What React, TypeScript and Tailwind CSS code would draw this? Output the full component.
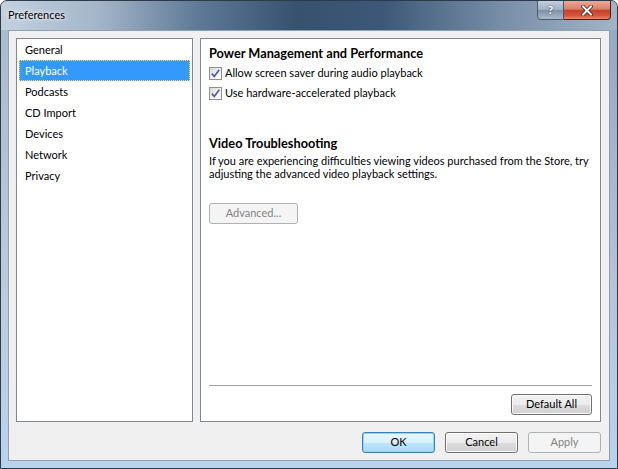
import React from "react";

const font = { fontFamily: 'Lato, "Noto Sans", sans-serif' };

function Checkbox() {
  return (
    <div className="w-[13px] h-[13px] border border-[#8f8f8f] bg-[linear-gradient(135deg,#d8d8d8_0%,#f4f4f4_60%,#ffffff_100%)] flex items-center justify-center shrink-0">
      <svg width="11" height="11" viewBox="0 0 11 11">
        <path d="M1.8 5.6 L4.3 8.4 L9.3 1.8" fill="none" stroke="#4a5f97" strokeWidth="1.7" />
      </svg>
    </div>
  );
}

function Btn({
  children,
  w,
  variant = "normal",
}: {
  children: React.ReactNode;
  w: string;
  variant?: "normal" | "focus" | "disabled";
}) {
  if (variant === "disabled") {
    return (
      <div className={`${w} h-[21px] shrink-0 rounded-[3px] border border-[#adb2b5] bg-[#f4f4f4] text-[#838383] flex items-center justify-center text-[11px]`}>
        {children}
      </div>
    );
  }
  if (variant === "focus") {
    return (
      <div className={`${w} h-[21px] shrink-0 rounded-[3px] border border-[#3c7fb1] bg-[linear-gradient(to_bottom,#eaf6fd_0%,#d9f0fc_50%,#bee6fd_51%,#a7d9f5_100%)] shadow-[inset_0_0_0_1px_#8fd6f8] text-black flex items-center justify-center text-[11px]`}>
        {children}
      </div>
    );
  }
  return (
    <div className={`${w} h-[21px] shrink-0 rounded-[3px] border border-[#707070] bg-[linear-gradient(to_bottom,#f2f2f2_0%,#ebebeb_50%,#dddddd_51%,#cfcfcf_100%)] shadow-[inset_0_0_0_1px_#fcfcfc] text-black flex items-center justify-center text-[11px]`}>
      {children}
    </div>
  );
}

export default function App() {
  const items = ["General", "Playback", "Podcasts", "CD Import", "Devices", "Network", "Privacy"];
  return (
    <div className="w-[618px] h-[469px] bg-white overflow-hidden" style={font}>
      <div className="w-[618px] h-[469px] flex flex-col rounded-t-[7px] border border-[#2c3a4a] bg-[#a9bbce] overflow-hidden">
        {/* Title bar */}
        <div className="h-[29px] shrink-0 relative flex items-center pl-[7px] bg-[linear-gradient(90deg,#c3d1df_0%,#a3b5c8_16%,#5f7996_32%,#36526f_48%,#3d5878_62%,#7a90a9_82%,#a2b4c6_100%)]">
          <span className="text-[11px] text-black [text-shadow:0_0_6px_rgba(255,255,255,0.9),0_0_3px_rgba(255,255,255,0.9)]">
            Preferences
          </span>
          <div className="absolute right-[6px] top-[-1px] flex">
            <div className="w-[27px] h-[20px] rounded-bl-[4px] border border-[#4a5a6c] bg-[linear-gradient(to_bottom,#c2cfdd_0%,#9eafc2_50%,#7e90a6_51%,#a9bacb_100%)] flex items-center justify-center text-white text-[12px] font-bold [text-shadow:0_0_2px_#223]">
              ?
            </div>
            <div className="w-[47px] h-[20px] rounded-br-[4px] border border-l-0 border-[#5a1a12] bg-[linear-gradient(to_bottom,#e9a999_0%,#dc8068_45%,#c7412a_52%,#d4543a_80%,#e88a6a_100%)] flex items-center justify-center">
              <svg width="12" height="11" viewBox="0 0 12 11">
                <path d="M2 1.5 L10 9.5 M10 1.5 L2 9.5" stroke="#3a1a14" strokeWidth="3.4" strokeLinecap="square" />
                <path d="M2 1.5 L10 9.5 M10 1.5 L2 9.5" stroke="#ffffff" strokeWidth="2" strokeLinecap="square" />
              </svg>
            </div>
          </div>
        </div>
        {/* Body with side frames */}
        <div className="flex-1 flex min-h-0">
          <div className="w-[7px] shrink-0 bg-[linear-gradient(to_bottom,#a9bbce_0%,#bccbdc_60%,#b9d3ec_100%)]" />
          <div className="w-[602px] shrink-0 flex flex-col bg-[#f0f0f0] border border-[#8fa0b3] pt-[7px] pl-[7px] pr-[8px] pb-[8px]">
            <div className="flex gap-[7px] h-[384px] shrink-0">
              {/* Left list */}
              <div className="w-[177px] shrink-0 h-full bg-white border border-[#828790] px-[2px]">
                {items.map((it) => (
                  <div
                    key={it}
                    className={`h-[21px] flex items-center pl-[5px] pt-[2px] text-[11px] ${
                      it === "Playback"
                        ? "bg-[#3399ff] text-white border border-dotted border-[#f5e08a]"
                        : "text-black border border-transparent"
                    }`}
                  >
                    {it}
                  </div>
                ))}
              </div>
              {/* Right panel */}
              <div className="w-[401px] shrink-0 h-full bg-white border border-[#828790] flex flex-col pt-[7px] px-[8px] pb-[6px] text-[11px] text-black">
                <div className="font-bold text-[12.75px] leading-[15px] whitespace-nowrap">Power Management and Performance</div>
                <div className="mt-[2px] h-[20px] flex items-center gap-[3px]">
                  <Checkbox />
                  <span className="whitespace-nowrap">Allow screen saver during audio playback</span>
                </div>
                <div className="h-[20px] flex items-center gap-[3px]">
                  <Checkbox />
                  <span className="whitespace-nowrap">Use hardware-accelerated playback</span>
                </div>
                <div className="mt-[33px] font-bold text-[12.75px] leading-[15px] whitespace-nowrap">Video Troubleshooting</div>
                <div className="mt-[3px] leading-[13px] whitespace-nowrap">
                  If you are experiencing difficulties viewing videos purchased from the Store, try
                  <br />
                  adjusting the advanced video playback settings.
                </div>
                <div className="mt-[23px]">
                  <Btn w="w-[89px]" variant="disabled">
                    Advanced...
                  </Btn>
                </div>
                <div className="flex-1" />
                <div className="border-t border-[#a0a0a0]" />
                <div className="mt-[8px] flex justify-end">
                  <Btn w="w-[81px]">Default All</Btn>
                </div>
              </div>
            </div>
            <div className="mt-[10px] flex justify-end">
              <Btn w="w-[73px]" variant="focus">
                OK
              </Btn>
              <div className="w-[10px]" />
              <Btn w="w-[73px]">Cancel</Btn>
              <div className="w-[10px]" />
              <Btn w="w-[73px]" variant="disabled">
                Apply
              </Btn>
            </div>
          </div>
          <div className="w-[7px] shrink-0 bg-[linear-gradient(to_bottom,#95a9bf_0%,#b4c5d8_60%,#b9d3ec_100%)]" />
        </div>
        <div className="h-[7px] shrink-0 bg-[#b9d3ec]" />
      </div>
    </div>
  );
}
